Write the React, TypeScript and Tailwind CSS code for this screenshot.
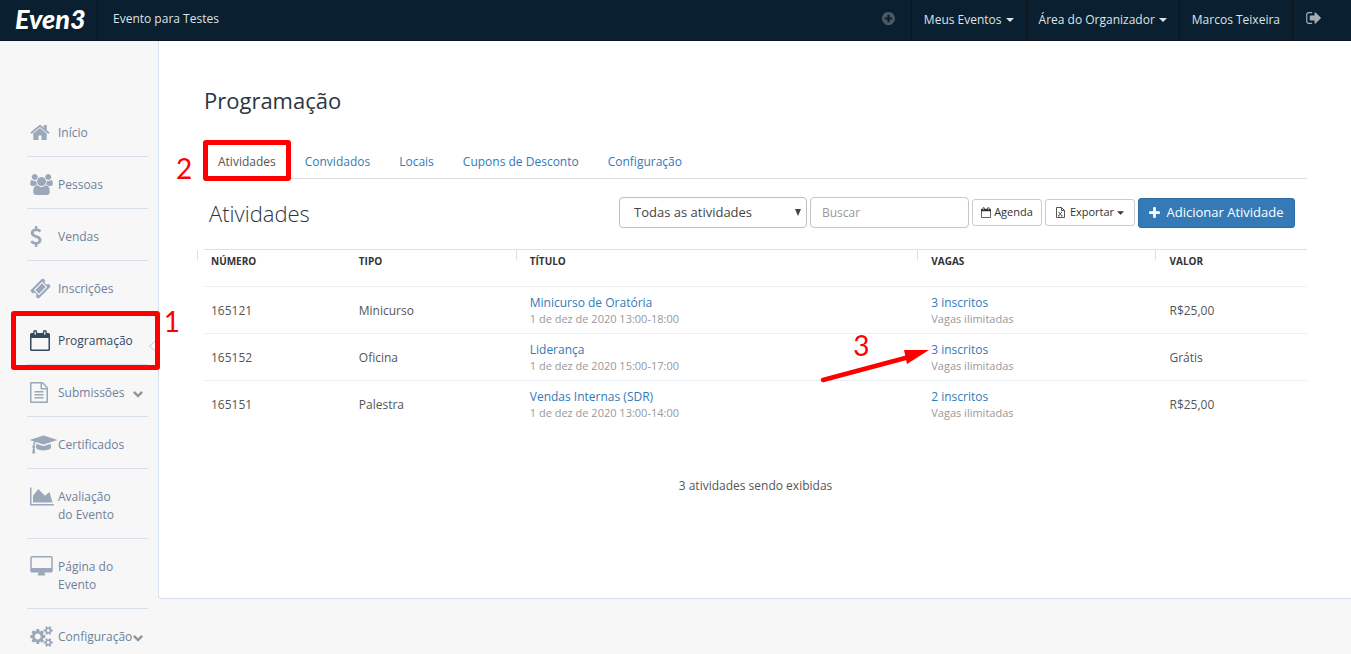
import React from "react";

type Glyph = { box: string; d: string };

const glyphs: Record<string, Glyph> = {
  home: {
    box: "64 0 1664 1792",
    d: "M1472 992v480q0 26-19 45t-45 19h-384v-384h-256v384h-384q-26 0-45-19t-19-45v-480q0-1 .5-3t.5-3l575-474 575 474q1 2 1 6zm223-69l-62 74q-8 9-21 11h-3q-13 0-21-7l-692-577-692 577q-12 8-24 7-13-2-21-11l-62-74q-8-10-7-23.5t11-21.5l719-599q32-26 76-26t76 26l244 204v-195q0-14 9-23t23-9h192q14 0 23 9t9 23v408l219 182q10 8 11 21.5t-7 23.5z",
  },
  users: {
    box: "0 0 1920 1792",
    d: "M593 896q-162 5-265 128h-134q-82 0-138-40.5t-56-118.5q0-353 124-353 6 0 43.5 21t97.5 42.5 119 21.5q67 0 133-23-5 37-5 66 0 139 81 256zm1071 637q0 120-73 189.5t-194 69.5h-874q-121 0-194-69.5t-73-189.5q0-53 3.5-103.5t14-109 26.5-108.5 43-97.5 62-81 85.5-53.5 111.5-20q10 0 43 21.5t73 48 107 48 135 21.5 135-21.5 107-48 73-48 43-21.5q61 0 111.5 20t85.5 53.5 62 81 43 97.5 26.5 108.5 14 109 3.5 103.5zm-1024-1277q0 106-75 181t-181 75-181-75-75-181 75-181 181-75 181 75 75 181zm704 384q0 159-112.5 271.5t-271.5 112.5-271.5-112.5-112.5-271.5 112.5-271.5 271.5-112.5 271.5 112.5 112.5 271.5zm576 225q0 78-56 118.5t-138 40.5h-134q-103-123-265-128 81-117 81-256 0-29-5-66 66 23 133 23 59 0 119-21.5t97.5-42.5 43.5-21q124 0 124 353zm-128-609q0 106-75 181t-181 75-181-75-75-181 75-181 181-75 181 75 75 181z",
  },
  dollar: {
    box: "0 0 1024 1792",
    d: "M978 1185q0 153-99.5 263.5t-258.5 136.5v175q0 14-9 23t-23 9h-135q-13 0-22.5-9.5t-9.5-22.5v-175q-66-9-127.5-31t-101.5-44.5-74-48-46.5-37.5-17.5-18q-17-21-2-41l103-135q7-10 23-12 15-2 24 9l2 2q113 99 243 125 37 8 74 8 81 0 142.5-43t61.5-122q0-28-15-53t-33.5-42-58.5-37.5-66-32-80-32.5q-39-16-61.5-25t-61.5-26.5-62.5-31-56.5-35.5-53.5-42.5-43.5-49-35.5-58-21-66.5-8.5-78q0-138 98-242t255-134v-180q0-13 9.5-22.5t22.5-9.5h135q14 0 23 9t9 23v176q57 6 110.5 23t87 33.5 63.5 37.5 39 29 15 14q17 18 5 38l-81 146q-8 15-23 16-14 3-27-7-3-3-14.5-12t-39-26.5-58.5-32-74.5-26-85.5-11.5q-95 0-155 43t-60 111q0 26 8.5 48t29.5 41.5 39.5 33 56 31 60.5 27 70 27.5q53 20 81 31.5t76 35 75.5 42.5 62 50 53 63.5 31.5 76.5 13 94z",
  },
  ticket: {
    box: "0 0 1792 1792",
    d: "M1024 452l316 316-572 572-316-316zm-211 979l618-618q19-19 19-45t-19-45l-362-362q-18-18-45-18t-45 18l-618 618q-19 19-19 45t19 45l362 362q18 18 45 18t45-18zm889-637l-907 908q-37 37-90.5 37t-90.5-37l-126-126q56-56 56-136t-56-136-136-56-136 56l-125-126q-37-37-37-90.5t37-90.5l907-906q37-37 90.5-37t90.5 37l125 125q-56 56-56 136t56 136 136 56 136-56l126 125q37 37 37 90.5t-37 90.5z",
  },
  calendar: {
    box: "0 0 20 21",
    d: "M1.500 3H3.200V2A2 2 0 0 1 7.200 2V3H12.800V2A2 2 0 0 1 16.800 2V3H18.500A1.500 1.500 0 0 1 20 4.500V19.500A1.500 1.500 0 0 1 18.500 21H1.500A1.500 1.500 0 0 1 0 19.500V4.500A1.500 1.500 0 0 1 1.500 3ZM1.500 8V19.500H18.500V8ZM4.600 2V4.800H5.800V2A.6 .6 0 0 0 4.600 2ZM14.200 2V4.800H15.400V2A.6 .6 0 0 0 14.200 2Z",
  },
  file: {
    box: "128 0 1536 1792",
    d: "M1596 380q28 28 48 76t20 88v1152q0 40-28 68t-68 28h-1344q-40 0-68-28t-28-68v-1600q0-40 28-68t68-28h896q40 0 88 20t76 48zm-444-244v376h376q-10-29-22-41l-313-313q-12-12-41-22zm384 1528v-1024h-416q-40 0-68-28t-28-68v-416h-768v1536h1280zm-1024-864q0-14 9-23t23-9h704q14 0 23 9t9 23v64q0 14-9 23t-23 9h-704q-14 0-23-9t-9-23v-64zm736 224q14 0 23 9t9 23v64q0 14-9 23t-23 9h-704q-14 0-23-9t-9-23v-64q0-14 9-23t23-9h704zm0 256q14 0 23 9t9 23v64q0 14-9 23t-23 9h-704q-14 0-23-9t-9-23v-64q0-14 9-23t23-9h704z",
  },
  graduation: {
    box: "0 0 2304 1792",
    d: "M1774 836l18 316q4 69-82 128t-235 93.5-323 34.500-323-34.500-235-93.500-82-128l18-316 574 181q22 7 48 7t48-7zm530-324q0 23-22 31l-1120 352q-4 1-10 1t-10-1l-652-206q-43 34-71 111.500t-34 178.500q63 36 63 109 0 69-58 107l58 433q2 14-8 25-9 11-24 11h-192q-15 0-24-11-10-11-8-25l58-433q-58-38-58-107 0-73 65-111 11-207 98-330l-333-104q-22-8-22-31t22-31l1120-352q4-1 10-1t10 1l1120 352q22 8 22 31z",
  },
  area: {
    box: "0 0 2048 1792",
    d: "M2048 1536v128h-2048v-1536h128v1408h1920zm-384-1024l256 896h-1664v-576l448-576 576 576z",
  },
  desktop: {
    box: "-64 0 1920 1792",
    d: "M1728 992v-832q0-13-9.500-22.500t-22.500-9.500h-1600q-13 0-22.500 9.500t-9.500 22.500v832q0 13 9.500 22.500t22.500 9.500h1600q13 0 22.500-9.500t9.500-22.500zm128-832v1088q0 66-47 113t-113 47h-544q0 37 16 77.500t32 71 16 43.500q0 26-19 45t-45 19h-512q-26 0-45-19t-19-45q0-14 16-44t32-70 16-78h-544q-66 0-113-47t-47-113v-1088q0-66 47-113t113-47h1600q66 0 113 47t47 113z",
  },
  cogs: {
    box: "0 0 1920 1792",
    d: "M896 896q0-106-75-181t-181-75-181 75-75 181 75 181 181 75 181-75 75-181zm768 512q0-52-38-90t-90-38-90 38-38 90q0 53 37.5 90.5t90.5 37.5 90.5-37.5 37.5-90.5zm0-1024q0-52-38-90t-90-38-90 38-38 90q0 53 37.5 90.5t90.5 37.5 90.5-37.5 37.5-90.5zm-384 421v185q0 10-7 19.5t-16 10.5l-155 24q-11 35-32 76 34 48 90 115 7 11 7 20 0 12-7 19-23 30-82.5 89.5t-78.5 59.5q-11 0-21-7l-115-90q-37 19-77 31-11 108-23 155-7 24-30 24h-186q-11 0-20-7.5t-10-17.5l-23-153q-34-10-75-31l-118 89q-7 7-20 7-11 0-21-8-144-133-144-160 0-9 7-19 10-14 41-53t47-61q-23-44-35-82l-152-24q-10-1-17-9.5t-7-19.5v-185q0-10 7-19.5t16-10.5l155-24q11-35 32-76-34-48-90-115-7-11-7-20 0-12 7-20 22-30 82-89t79-59q11 0 21 7l115 90q34-18 77-32 11-108 23-154 7-24 30-24h186q11 0 20 7.5t10 17.5l23 153q34 10 75 31l118-89q8-7 20-7 11 0 21 8 144 133 144 160 0 8-7 19-12 16-42 54t-45 60q23 48 34 82l152 23q10 2 17 10.5t7 19.5zm640 533v140q0 16-149 31-12 27-30 52 51 113 51 138 0 4-4 7-122 71-124 71-8 0-46-47t-52-68q-20 2-30 2t-30-2q-14 21-52 68t-46 47q-2 0-124-71-4-3-4-7 0-25 51-138-18-25-30-52-149-15-149-31v-140q0-16 149-31 13-29 30-52-51-113-51-138 0-4 4-7 4-2 35-20t59-34 30-16q8 0 46 46.5t52 67.5q20-2 30-2t30 2q51-71 92-112l6-2q4 0 124 70 4 3 4 7 0 25-51 138 17 23 30 52 149 15 149 31zm0-1024v140q0 16-149 31-12 27-30 52 51 113 51 138 0 4-4 7-122 71-124 71-8 0-46-47t-52-68q-20 2-30 2t-30-2q-14 21-52 68t-46 47q-2 0-124-71-4-3-4-7 0-25 51-138-18-25-30-52-149-15-149-31v-140q0-16 149-31 13-29 30-52-51-113-51-138 0-4 4-7 4-2 35-20t59-34 30-16q8 0 46 46.5t52 67.5q20-2 30-2t30 2q51-71 92-112l6-2q4 0 124 70 4 3 4 7 0 25-51 138 17 23 30 52 149 15 149 31z",
  },
  plusCircle: {
    box: "128 128 1536 1536",
    d: "M1344 960v-128q0-26-19-45t-45-19h-256v-256q0-26-19-45t-45-19h-128q-26 0-45 19t-19 45v256h-256q-26 0-45 19t-19 45v128q0 26 19 45t45 19h256v256q0 26 19 45t45 19h128q26 0 45-19t19-45v-256h256q26 0 45-19t19-45zm320-64q0 209-103 385.5t-279.5 279.5-385.5 103-385.5-103-279.5-279.5-103-385.5 103-385.5 279.5-279.5 385.5-103 385.5 103 279.5 279.5 103 385.5z",
  },
  signOut: {
    box: "64 256 1568 1280",
    d: "M704 1440q0 4 1 20t.5 26.5-3 23.5-10 19.5-20.5 6.5h-320q-119 0-203.5-84.5t-84.5-203.5v-704q0-119 84.5-203.5t203.5-84.5h320q13 0 22.5 9.5t9.5 22.5q0 4 1 20t.5 26.5-3 23.5-10 19.5-20.5 6.5h-320q-66 0-113 47t-47 113v704q0 66 47 113t113 47h312l11.5 1 11.5 3 8 5.5 7 9 2 13.5zm928-544q0 26-19 45l-544 544q-19 19-45 19t-45-19-19-45v-288h-448q-26 0-45-19t-19-45v-384q0-26 19-45t45-19h448v-288q0-26 19-45t45-19 45 19l544 544q19 19 19 45z",
  },
  plus: {
    box: "0 0 12 12",
    d: "M4.500 1A1 1 0 0 1 5.500 0H6.500A1 1 0 0 1 7.500 1V4.500H11A1 1 0 0 1 12 5.500V6.500A1 1 0 0 1 11 7.500H7.500V11A1 1 0 0 1 6.500 12H5.500A1 1 0 0 1 4.500 11V7.500H1A1 1 0 0 1 0 6.500V5.500A1 1 0 0 1 1 4.500H4.500Z",
  },
  caret: { box: "0 0 8 4", d: "M0 0H8L4 4Z" },
  chevron: { box: "0 0 10 7", d: "M0 1.700L1.700 0L5 3.300L8.300 0L10 1.700L5 6.700Z" },
};

function Icon({ name, className }: { name: string; className: string }) {
  const g = glyphs[name];
  return (
    <svg viewBox={g.box} className={className} fill="currentColor" aria-hidden="true">
      <path d={g.d} fillRule={name === "calendar" ? "evenodd" : "nonzero"} />
    </svg>
  );
}

type NavItem = { label: string; icon: string; size: string; active?: boolean; expand?: boolean };

const navItems: NavItem[] = [
  { label: "Início", icon: "home", size: "w-5 h-[21px]" },
  { label: "Pessoas", icon: "users", size: "w-[23px] h-[21px]" },
  { label: "Vendas", icon: "dollar", size: "w-3 h-[21px]" },
  { label: "Inscrições", icon: "ticket", size: "w-[21px] h-[21px]" },
  { label: "Programação", icon: "calendar", size: "w-5 h-[21px]", active: true },
  { label: "Submissões", icon: "file", size: "w-[18px] h-[21px]", expand: true },
  { label: "Certificados", icon: "graduation", size: "w-[27px] h-[21px]" },
  { label: "Avaliação do Evento", icon: "area", size: "w-6 h-[21px]" },
  { label: "Página do Evento", icon: "desktop", size: "w-[23px] h-[21px]" },
  { label: "Configuração", icon: "cogs", size: "w-[23px] h-[21px]", expand: true },
];

const tabs = ["Atividades", "Convidados", "Locais", "Cupons de Desconto", "Configuração"];

const columns = [
  { label: "NÚMERO", width: "w-[13.4%]", tick: true },
  { label: "TIPO", width: "w-[15.5%]", tick: false },
  { label: "TÍTULO", width: "w-[36.4%]", tick: true },
  { label: "VAGAS", width: "w-[21.6%]", tick: true },
  { label: "VALOR", width: "w-[13.1%]", tick: true },
];

const rows = [
  { id: "165121", type: "Minicurso", title: "Minicurso de Oratória", when: "1 de dez de 2020 13:00-18:00", count: "3 inscritos", price: "R$25,00" },
  { id: "165152", type: "Oficina", title: "Liderança", when: "1 de dez de 2020 15:00-17:00", count: "3 inscritos", price: "Grátis", marked: true },
  { id: "165151", type: "Palestra", title: "Vendas Internas (SDR)", when: "1 de dez de 2020 13:00-14:00", count: "2 inscritos", price: "R$25,00" },
];

function TopBar() {
  return (
    <header className="flex h-[41px] items-stretch border-b border-[#0c1620] bg-[#0a1f2f] text-[12px] text-[#dfe3e6]">
      <a href="#" className="flex w-[98px] items-center border-r border-[#101418] pb-1 pl-[15px] font-['Lato',sans-serif] text-[27px] leading-none font-black text-white italic">
        Even3
      </a>
      <a href="#" className="flex items-center px-[15px] pb-[3px]">Evento para Testes</a>
      <nav className="ml-auto flex items-stretch">
        <button type="button" aria-label="Adicionar" className="flex items-center px-4 pb-1 text-[#4b5a66]">
          <Icon name="plusCircle" className="h-[13px] w-[13px]" />
        </button>
        <button type="button" className="flex items-center gap-1 border-l border-[#101418] px-3">
          Meus Eventos <Icon name="caret" className="h-1 w-2" />
        </button>
        <button type="button" className="flex items-center gap-1 border-l border-[#101418] px-3">
          Área do Organizador <Icon name="caret" className="h-1 w-2" />
        </button>
        <a href="#" className="flex items-center border-l border-[#101418] px-3">Marcos Teixeira</a>
        <button type="button" aria-label="Sair" className="flex w-[59px] items-center border-l border-[#101418] pb-1 pl-[13px] text-[#a4adb5]">
          <Icon name="signOut" className="h-3 w-[15px]" />
        </button>
      </nav>
    </header>
  );
}

function Sidebar() {
  return (
    <aside className="w-[158px] shrink-0 pt-16 pr-[10px] pl-[27px]">
      <ul>
        {navItems.map((item) => (
          <li key={item.label} className="relative border-b border-[#d7dfe8] pt-[19px] pb-[14px] last:border-0 last:pb-0">
            <a
              href="#"
              className={
                item.active
                  ? "flex items-start text-[12px] leading-[18px] text-[#34495e]"
                  : "flex items-start text-[12px] leading-[18px] text-[#6f8299]"
              }
            >
              <span className={item.active ? "-mt-[2px] h-[18px] w-[31px] shrink-0 pl-[3px]" : "-mt-[2px] h-[18px] w-[31px] shrink-0 pl-[3px] text-[#9aa8ba]"}>
                <Icon name={item.icon} className={`${item.size} max-w-none`} />
              </span>
              <span className={item.expand || item.active ? "whitespace-nowrap" : "max-w-[64px]"}>{item.label}</span>
              {item.expand && <Icon name="chevron" className="mt-[7px] mr-[5px] ml-auto h-[7px] w-[10px] shrink-0 text-[#8f979e]" />}
            </a>
            {item.active && (
              <>
                <svg viewBox="0 0 11 18" className="absolute top-6 -right-[11px] h-[18px] w-[11px]" aria-hidden="true">
                  <path d="M11 1L1.500 9L11 17" fill="#fff" stroke="#cfdce8" strokeWidth="1.200" />
                </svg>
                <div className="pointer-events-none absolute -top-[2px] -right-3 -left-4 h-[59px] rounded-[3px] border-[5px] border-[#ff0000]" />
                <span className="pointer-events-none absolute -top-[6px] -right-8 font-['Lato',sans-serif] text-[28px] leading-7 text-[#ff0000]">1</span>
              </>
            )}
          </li>
        ))}
      </ul>
    </aside>
  );
}

function Tabs() {
  return (
    <nav className="mt-[22px] flex h-[42px] gap-px border-b border-[#dddddd] text-[12px] leading-[18px]">
      {tabs.map((tab, i) => (
        <div key={tab} className="relative">
          <a href="#" className={i === 0 ? "block px-[14px] pt-4 text-[#555555]" : "block px-[14px] pt-4 text-[#337ab7]"}>
            {tab}
          </a>
          {i === 0 && (
            <>
              <div className="pointer-events-none absolute top-[3px] -right-px -left-px h-[41px] rounded-[3px] border-[5px] border-[#ff0000]" />
              <span className="pointer-events-none absolute top-[17px] -left-7 font-['Lato',sans-serif] text-[28px] leading-7 text-[#ff0000]">2</span>
            </>
          )}
        </div>
      ))}
    </nav>
  );
}

function Toolbar() {
  return (
    <div className="mt-[18px] flex items-center gap-[3px] pr-3">
      <h2 className="mr-auto pl-[5px] text-[22px] leading-[30px] font-light text-[#2c3542]">Atividades</h2>
      <div className="relative">
        <select aria-label="Filtrar atividades" className="h-[31px] w-[188px] appearance-none rounded-[4px] border border-[#bfbfbf] bg-white pl-[14px] text-[13px] text-[#444444]">
          <option>Todas as atividades</option>
        </select>
        <svg viewBox="0 0 6 7" className="pointer-events-none absolute top-3 right-[6px] h-[7px] w-[6px]" aria-hidden="true">
          <path d="M0 0H6L3 7Z" fill="#444" />
        </svg>
      </div>
      <input type="text" aria-label="Buscar" placeholder="Buscar" className="h-[31px] w-[159px] rounded-[4px] border border-[#c6c6c6] px-[11px] text-[12px] placeholder:text-[#999999]" />
      <button type="button" className="flex h-[27px] w-[70px] items-center justify-center gap-[3px] rounded-[3px] border border-[#cccccc] text-[11px] text-[#333333]">
        <Icon name="calendar" className="h-[11px] w-[10px]" />
        Agenda
      </button>
      <button type="button" className="flex h-[27px] w-[90px] items-center justify-center rounded-[3px] border border-[#cccccc] text-[11px] text-[#333333]">
        <svg viewBox="0 0 9 11" className="mr-[5px] h-[11px] w-[9px]" fill="none" stroke="#444" strokeWidth=".9" aria-hidden="true">
          <path d="M.5 .5H5.500L8.500 3.500V10.500H.5ZM5.500 .5V3.500H8.500M2.500 4.800L6 9M6 4.800L2.500 9M2 9H3.400M5.200 9H6.700" />
        </svg>
        Exportar
        <Icon name="caret" className="ml-[3px] h-1 w-[7px]" />
      </button>
      <button type="button" className="flex h-[30px] w-[157px] items-center justify-center gap-[6px] rounded-[3px] border border-[#2e6da4] bg-[#337ab7] text-[13px] text-white">
        <Icon name="plus" className="h-[11px] w-[11px]" />
        Adicionar Atividade
      </button>
    </div>
  );
}

function ActivityTable() {
  return (
    <table className="mt-[21px] w-full table-fixed border-collapse text-left text-[12px] text-[#555555]">
      <thead>
        <tr className="h-[37px] border-t border-b border-t-[#dce1e8] border-b-[#edf0f4]">
          {columns.map((c) => (
            <th key={c.label} className={`${c.width} relative px-[7px] pt-[3px] align-top text-[10px] leading-4 font-bold text-[#333333]`}>
              {c.tick && <span className="absolute top-0 -left-[7px] h-[10px] w-px bg-[#dce1e8]" />}
              {c.label}
            </th>
          ))}
        </tr>
      </thead>
      <tbody>
        {rows.map((r) => (
          <tr key={r.id} className="h-[47px] border-b border-[#e9f0f5] last:border-0">
            <td className="px-[7px] pt-[2px]">{r.id}</td>
            <td className="px-[7px] pt-[2px]">{r.type}</td>
            <td className="px-[7px]">
              <a href="#" className="block leading-[17px] text-[#337ab7]">{r.title}</a>
              <span className="block text-[11px] leading-4 text-[#999999]">{r.when}</span>
            </td>
            <td className="relative px-[7px]">
              <a href="#" className="block leading-[17px] text-[#337ab7]">{r.count}</a>
              <span className="block text-[11px] leading-4 text-[#999999]">Vagas ilimitadas</span>
              {r.marked && (
                <>
                  <svg viewBox="0 0 110 36" className="pointer-events-none absolute top-[14px] -left-[105px] h-9 w-[110px]" aria-hidden="true">
                    <path d="M4 32L90 9" stroke="#f00" strokeWidth="4.500" strokeLinecap="round" />
                    <path d="M110 2L85 2L88 16Z" fill="#f00" />
                  </svg>
                  <span className="pointer-events-none absolute -top-[3px] -left-[71px] font-['Lato',sans-serif] text-[28px] leading-7 text-[#ff0000]">3</span>
                </>
              )}
            </td>
            <td className="px-[7px] pt-[2px]">{r.price}</td>
          </tr>
        ))}
      </tbody>
    </table>
  );
}

export default function App() {
  return (
    <div className="min-h-screen bg-[#f7f7f7] font-['Open_Sans',sans-serif]">
      <TopBar />
      <div className="flex items-start">
        <Sidebar />
        <main className="min-w-0 flex-1 rounded-bl-[4px] border-b border-l border-[#d5e0ea] bg-white pt-11 pr-11 pb-[103px] pl-[45px]">
          <h1 className="text-[22px] leading-[30px] text-[#2c3542]">Programação</h1>
          <Tabs />
          <Toolbar />
          <ActivityTable />
          <p className="mt-[49px] text-center text-[12px] leading-[18px] text-[#555555]">3 atividades sendo exibidas</p>
        </main>
      </div>
    </div>
  );
}
